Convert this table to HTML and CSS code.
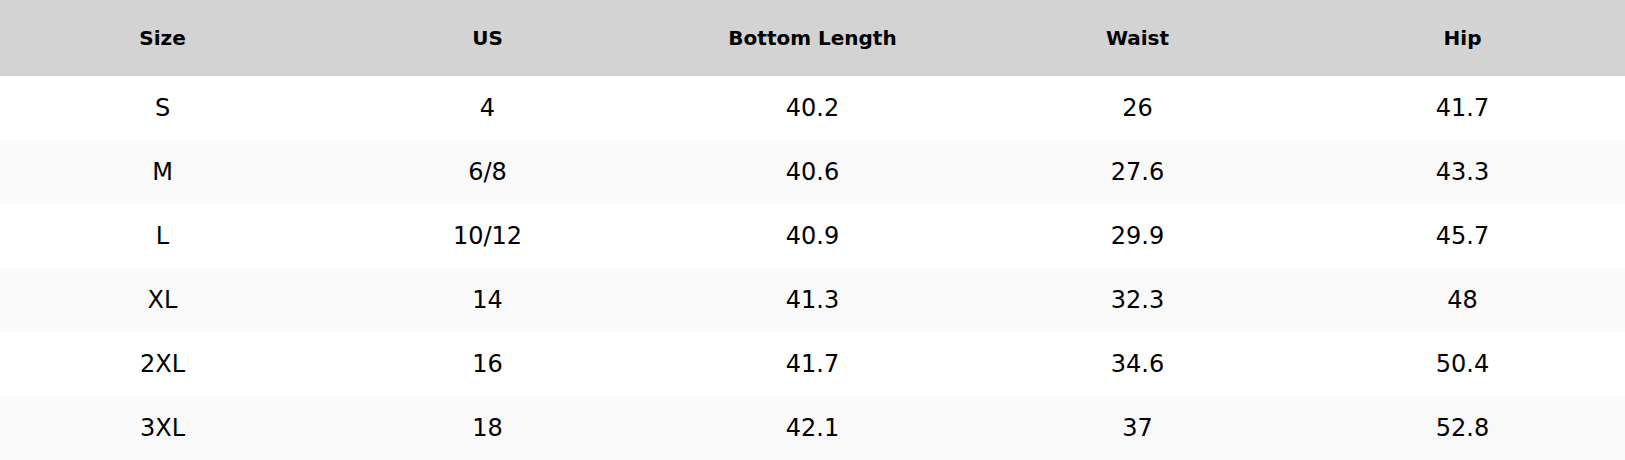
FILE: index.html
```html
<!DOCTYPE html>
<html>
<head>
<meta charset="utf-8">
<link rel="stylesheet" href="styles.css">
</head>
<body>
<table class="size-table">
  <thead>
    <tr><th>Size</th><th>US</th><th>Bottom Length</th><th>Waist</th><th>Hip</th></tr>
  </thead>
  <tbody>
    <tr><td>S</td><td>4</td><td>40.2</td><td>26</td><td>41.7</td></tr>
    <tr><td>M</td><td>6/8</td><td>40.6</td><td>27.6</td><td>43.3</td></tr>
    <tr><td>L</td><td>10/12</td><td>40.9</td><td>29.9</td><td>45.7</td></tr>
    <tr><td>XL</td><td>14</td><td>41.3</td><td>32.3</td><td>48</td></tr>
    <tr><td>2XL</td><td>16</td><td>41.7</td><td>34.6</td><td>50.4</td></tr>
    <tr><td>3XL</td><td>18</td><td>42.1</td><td>37</td><td>52.8</td></tr>
  </tbody>
</table>
</body>
</html>
```

FILE: styles.css
```css
html, body {
  margin: 0;
  padding: 0;
  background: #ffffff;
}
.size-table {
  width: 1625px;
  border-collapse: collapse;
  table-layout: fixed;
  font-family: "DejaVu Sans", sans-serif;
  color: #000;
}
.size-table th {
  background: #d3d3d3;
  height: 76px;
  padding: 0;
  font-size: 20px;
  font-weight: bold;
  text-align: center;
  vertical-align: middle;
}
.size-table td {
  height: 64px;
  padding: 0;
  font-size: 24px;
  text-align: center;
  vertical-align: middle;
}
.size-table tbody tr:nth-child(even) {
  background: #f9f9f9;
}
```
